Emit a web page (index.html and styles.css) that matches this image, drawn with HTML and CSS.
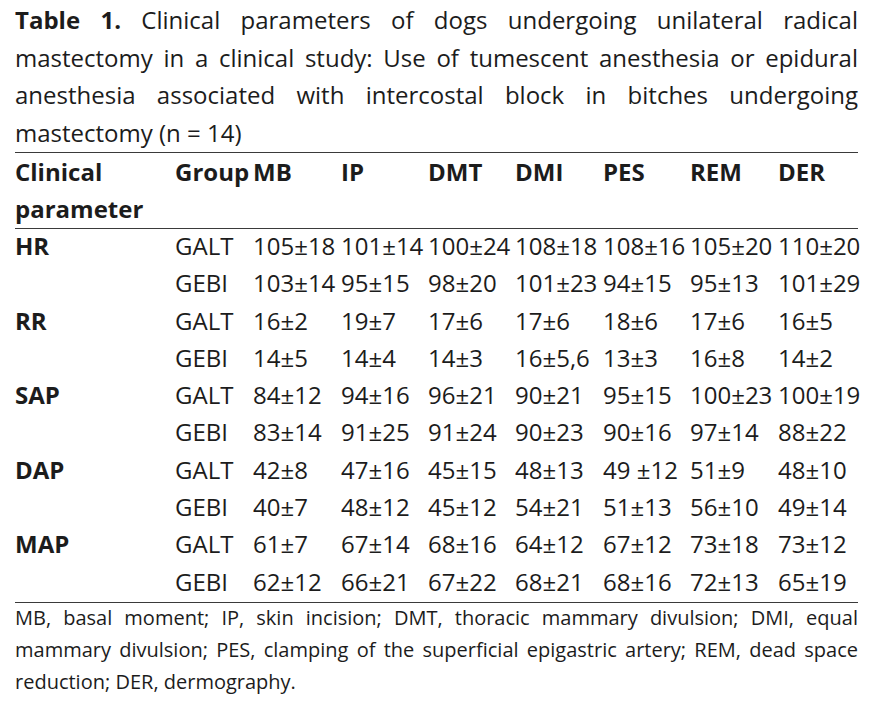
FILE: index.html
```html
<!DOCTYPE html>
<html lang="en">
<head>
<meta charset="utf-8">
<title>Table 1</title>
<link rel="stylesheet" href="styles.css">
</head>
<body>
<div class="page">
  <p class="caption"><b>Table 1.</b> Clinical parameters of dogs undergoing unilateral radical mastectomy in a clinical study: Use of tumescent anesthesia or epidural anesthesia associated with intercostal block in bitches undergoing mastectomy (n = 14)</p>
  <table class="data">
    <colgroup>
      <col class="c-param"><col class="c-group"><col class="c-v1"><col class="c-v2"><col class="c-v3"><col class="c-v4"><col class="c-v5"><col class="c-v6"><col class="c-v7">
    </colgroup>
    <thead>
      <tr><th>Clinical parameter</th><th>Group</th><th>MB</th><th>IP</th><th>DMT</th><th>DMI</th><th>PES</th><th>REM</th><th>DER</th></tr>
    </thead>
    <tbody>
      <tr><td class="p">HR</td><td>GALT</td><td>105±18</td><td>101±14</td><td>100±24</td><td>108±18</td><td>108±16</td><td>105±20</td><td>110±20</td></tr>
      <tr><td class="p"></td><td>GEBI</td><td>103±14</td><td>95±15</td><td>98±20</td><td>101±23</td><td>94±15</td><td>95±13</td><td>101±29</td></tr>
      <tr><td class="p">RR</td><td>GALT</td><td>16±2</td><td>19±7</td><td>17±6</td><td>17±6</td><td>18±6</td><td>17±6</td><td>16±5</td></tr>
      <tr><td class="p"></td><td>GEBI</td><td>14±5</td><td>14±4</td><td>14±3</td><td>16±5,6</td><td>13±3</td><td>16±8</td><td>14±2</td></tr>
      <tr><td class="p">SAP</td><td>GALT</td><td>84±12</td><td>94±16</td><td>96±21</td><td>90±21</td><td>95±15</td><td>100±23</td><td>100±19</td></tr>
      <tr><td class="p"></td><td>GEBI</td><td>83±14</td><td>91±25</td><td>91±24</td><td>90±23</td><td>90±16</td><td>97±14</td><td>88±22</td></tr>
      <tr><td class="p">DAP</td><td>GALT</td><td>42±8</td><td>47±16</td><td>45±15</td><td>48±13</td><td>49 ±12</td><td>51±9</td><td>48±10</td></tr>
      <tr><td class="p"></td><td>GEBI</td><td>40±7</td><td>48±12</td><td>45±12</td><td>54±21</td><td>51±13</td><td>56±10</td><td>49±14</td></tr>
      <tr><td class="p">MAP</td><td>GALT</td><td>61±7</td><td>67±14</td><td>68±16</td><td>64±12</td><td>67±12</td><td>73±18</td><td>73±12</td></tr>
      <tr><td class="p"></td><td>GEBI</td><td>62±12</td><td>66±21</td><td>67±22</td><td>68±21</td><td>68±16</td><td>72±13</td><td>65±19</td></tr>
    </tbody>
  </table>
  <p class="note">MB, basal moment; IP, skin incision; DMT, thoracic mammary divulsion; DMI, equal mammary divulsion; PES, clamping of the superficial epigastric artery; REM, dead space reduction; DER, dermography.</p>
</div>
</body>
</html>
```
FILE: styles.css
```css
html, body {
  margin: 0;
  padding: 0;
  background: #ffffff;
}
body {
  font-family: "Open Sans", "Noto Sans", sans-serif;
  color: #1c1c1c;
}
.page {
  width: 843px;
  padding: 1px 0 0 15px;
}
.caption {
  margin: 0 0 1px;
  font-size: 24px;
  line-height: 37.5px;
  text-align: justify;
}
.caption b {
  font-weight: 700;
}
.data {
  width: 843px;
  border-collapse: collapse;
  table-layout: fixed;
  font-size: 24px;
  border-top: 1px solid #3a3a3a;
  border-bottom: 1px solid #3a3a3a;
}
.c-param { width: 160px; }
.c-group { width: 78px; }
.c-v1 { width: 88px; }
.c-v2 { width: 87px; }
.c-v3 { width: 87px; }
.c-v4 { width: 88px; }
.c-v5 { width: 87px; }
.c-v6 { width: 88px; }
.c-v7 { width: 80px; }
.data thead tr {
  border-bottom: 1px solid #3a3a3a;
}
.data th {
  text-align: left;
  vertical-align: top;
  font-weight: 700;
  line-height: 37px;
  padding: 0 0 1px;
}
.data td {
  text-align: left;
  vertical-align: top;
  line-height: 34.3px;
  padding: 0 0 3px;
  white-space: nowrap;
}
.data td.p {
  font-weight: 700;
}
.note {
  margin: -1px 0 0;
  font-size: 20px;
  line-height: 32px;
  text-align: justify;
}
```
